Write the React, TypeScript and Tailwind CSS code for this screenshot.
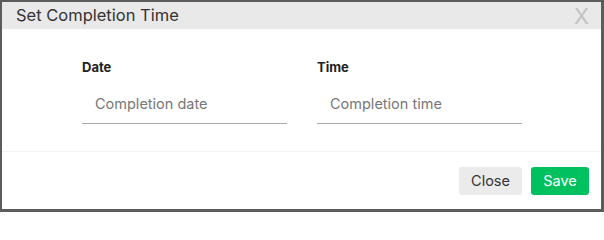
export default function App() {
  return (
    <div className="w-[604px] h-[212px] bg-[#5c5c5c] pt-[2px] pl-[2px] font-['Inter',sans-serif]">
      <div className="w-[599px] h-[207px] bg-white flex flex-col">
        {/* Header */}
        <div className="h-[27px] bg-[#e9e9e9] flex items-center justify-between pl-[14px] pr-[12px] shrink-0">
          <span className="text-[16.5px] text-[#333333] leading-none">Set Completion Time</span>
          <span className="text-[22px] text-[#c2c2c2] leading-none">X</span>
        </div>

        {/* Body */}
        <div className="flex gap-[30px] pl-[80px] pt-[32px] h-[123px] border-b border-[#f3f3f3] shrink-0">
          <div className="w-[205px]">
            <p className="text-[13px] font-bold text-[#222222] leading-none">Date</p>
            <input
              type="text"
              placeholder="Completion date"
              className="mt-[13px] w-full h-[37px] pb-[3px] border-b border-[#a8a8a8] px-[13px] text-[14.5px] text-[#333333] placeholder-[#777777] outline-none bg-transparent"
            />
          </div>
          <div className="w-[205px]">
            <p className="text-[13px] font-bold text-[#222222] leading-none">Time</p>
            <input
              type="text"
              placeholder="Completion time"
              className="mt-[13px] w-full h-[37px] pb-[3px] border-b border-[#a8a8a8] px-[13px] text-[14.5px] text-[#333333] placeholder-[#777777] outline-none bg-transparent"
            />
          </div>
        </div>

        {/* Footer */}
        <div className="flex justify-end gap-[9px] pr-[12px] pt-[15px]">
          <button className="w-[63px] h-[28px] rounded-[3px] bg-[#ebebeb] text-[14.5px] text-[#333333]">
            Close
          </button>
          <button className="w-[58px] h-[28px] rounded-[3px] bg-[#00c160] text-[14.5px] text-white">
            Save
          </button>
        </div>
      </div>
    </div>
  );
}
